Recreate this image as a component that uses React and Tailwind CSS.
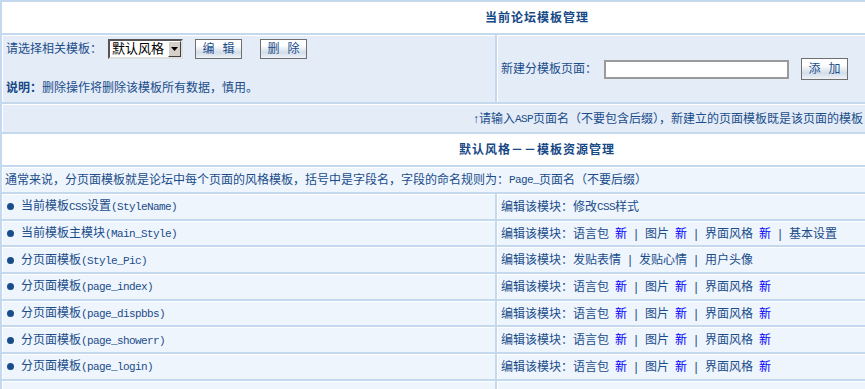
import React from "react";

const M = ({ children }) => (
  <span className="font-['Liberation_Mono',monospace] text-[11px] tracking-[-0.6px]">{children}</span>
);

const Btn = ({ a, b, className = "" }) => (
  <div
    className={`inline-flex items-center justify-center gap-[8px] w-[47px] border border-[#6f6f6f] bg-linear-to-b from-white from-30% via-[#d3dde9] via-70% to-[#eef2f7] text-[#1b4e8a] ${className}`}
  >
    <span>{a}</span>
    <span>{b}</span>
  </div>
);

const Sep = () => <span className="inline-block w-[18px] text-center">|</span>;
const New = () => <span className="ml-[6px] text-[#0000ff]">新</span>;

// 语言包 新 | 图片 新 | 界面风格 新
const langLinks = (
  <>
    语言包<New />
    <Sep />
    图片<New />
    <Sep />
    界面风格<New />
  </>
);

const rows = [
  {
    left: (
      <>
        当前模板<M>CSS</M>设置<M>(StyleName)</M>
      </>
    ),
    right: (
      <>
        修改<M>CSS</M>样式
      </>
    ),
  },
  {
    left: (
      <>
        当前模板主模块<M>(Main_Style)</M>
      </>
    ),
    right: (
      <>
        {langLinks}
        <Sep />
        基本设置
      </>
    ),
  },
  {
    left: (
      <>
        分页面模板<M>(Style_Pic)</M>
      </>
    ),
    right: (
      <>
        发贴表情
        <Sep />
        发贴心情
        <Sep />
        用户头像
      </>
    ),
  },
  { left: <>分页面模板<M>(page_index)</M></>, right: langLinks },
  { left: <>分页面模板<M>(page_dispbbs)</M></>, right: langLinks },
  { left: <>分页面模板<M>(page_showerr)</M></>, right: langLinks },
  { left: <>分页面模板<M>(page_login)</M></>, right: langLinks },
];

export default function App() {
  return (
    <div className="w-[865px] h-[389px] overflow-hidden bg-white font-['Liberation_Sans','Noto_Sans_CJK_SC',sans-serif] text-[12px] leading-[14px] text-[#1a4c8a]">
      <div className="w-[1074px] bg-[#c4d8ee] pt-[2px] px-[2px] flex flex-col gap-[2px] whitespace-nowrap">
        {/* title */}
        <div className="h-[31px] bg-white flex items-center justify-center font-bold tracking-[1px] text-[#154885]">
          当前论坛模板管理
        </div>

        {/* template select / new page */}
        <div className="h-[67px] flex gap-[2px]">
          <div className="w-[493px] bg-[#e4ecf8] border-t border-l border-white pl-[3px] pt-[2px]">
            <div className="h-[22px] flex items-center">
              <span>请选择相关模板：</span>
              <div className="ml-[6px] w-[75px] h-[20px] flex items-center bg-white border-2 border-t-[#555] border-l-[#555] border-r-[#e0e0e0] border-b-[#e0e0e0]">
                <span className="flex-1 pl-[2px] text-[13px] text-black">默认风格</span>
                <div className="w-[13px] h-[16px] flex items-center justify-center bg-[#d4d0c8] border border-t-white border-l-white border-r-[#404040] border-b-[#404040]">
                  <svg width="7" height="4" viewBox="0 0 7 4">
                    <path d="M0 0h7L3.5 4z" fill="#000" />
                  </svg>
                </div>
              </div>
              <Btn a="编" b="辑" className="ml-[12px] h-[20px]" />
              <Btn a="删" b="除" className="ml-[18px] h-[20px]" />
            </div>
            <div className="mt-[21px]">
              <span className="font-bold text-[#154885]">说明：</span>
              删除操作将删除该模板所有数据，慎用。
            </div>
          </div>
          <div className="flex-1 bg-[#e4ecf8] border-t border-l border-white pl-[3px] flex items-center">
            <span>新建分模板页面：</span>
            <div className="ml-[7px] w-[185px] h-[19px] bg-white border-2 border-[#9a9a9a]" />
            <Btn a="添" b="加" className="ml-[12px] h-[22px]" />
          </div>
        </div>

        {/* hint */}
        <div className="h-[28px] bg-[#e4ecf8] border-t border-l border-white flex items-center pl-[470px]">
          ↑请输入<M>ASP</M>页面名（不要包含后缀），新建立的页面模板既是该页面的模板
        </div>

        {/* section title */}
        <div className="h-[31px] bg-white flex items-center justify-center font-bold tracking-[1px] text-[#154885]">
          默认风格－－模板资源管理
        </div>

        <div className="h-[25px] bg-[#eef5fd] border-t border-l border-white flex items-center pl-[2px]">
          通常来说，分页面模板就是论坛中每个页面的风格模板，括号中是字段名，字段的命名规则为：<M>Page_</M>页面名（不要后缀）
        </div>

        {rows.map((r, i) => (
          <div key={i} className="h-[24.7px] flex gap-[2px]">
            <div className="w-[493px] bg-[#eef5fd] border-t border-l border-white pl-[4px] flex items-center">
              <span className="w-[7px] h-[7px] rounded-full bg-[#1a4c8a]" />
              <span className="ml-[7px]">{r.left}</span>
            </div>
            <div className="flex-1 bg-[#eef5fd] border-t border-l border-white pl-[3px] flex items-center">
              编辑该模块：{r.right}
            </div>
          </div>
        ))}

        {/* next row, mostly below the fold */}
        <div className="h-[24.7px] flex gap-[2px]">
          <div className="w-[493px] bg-[#eef5fd] border-t border-l border-white" />
          <div className="flex-1 bg-[#eef5fd] border-t border-l border-white" />
        </div>
      </div>
    </div>
  );
}
